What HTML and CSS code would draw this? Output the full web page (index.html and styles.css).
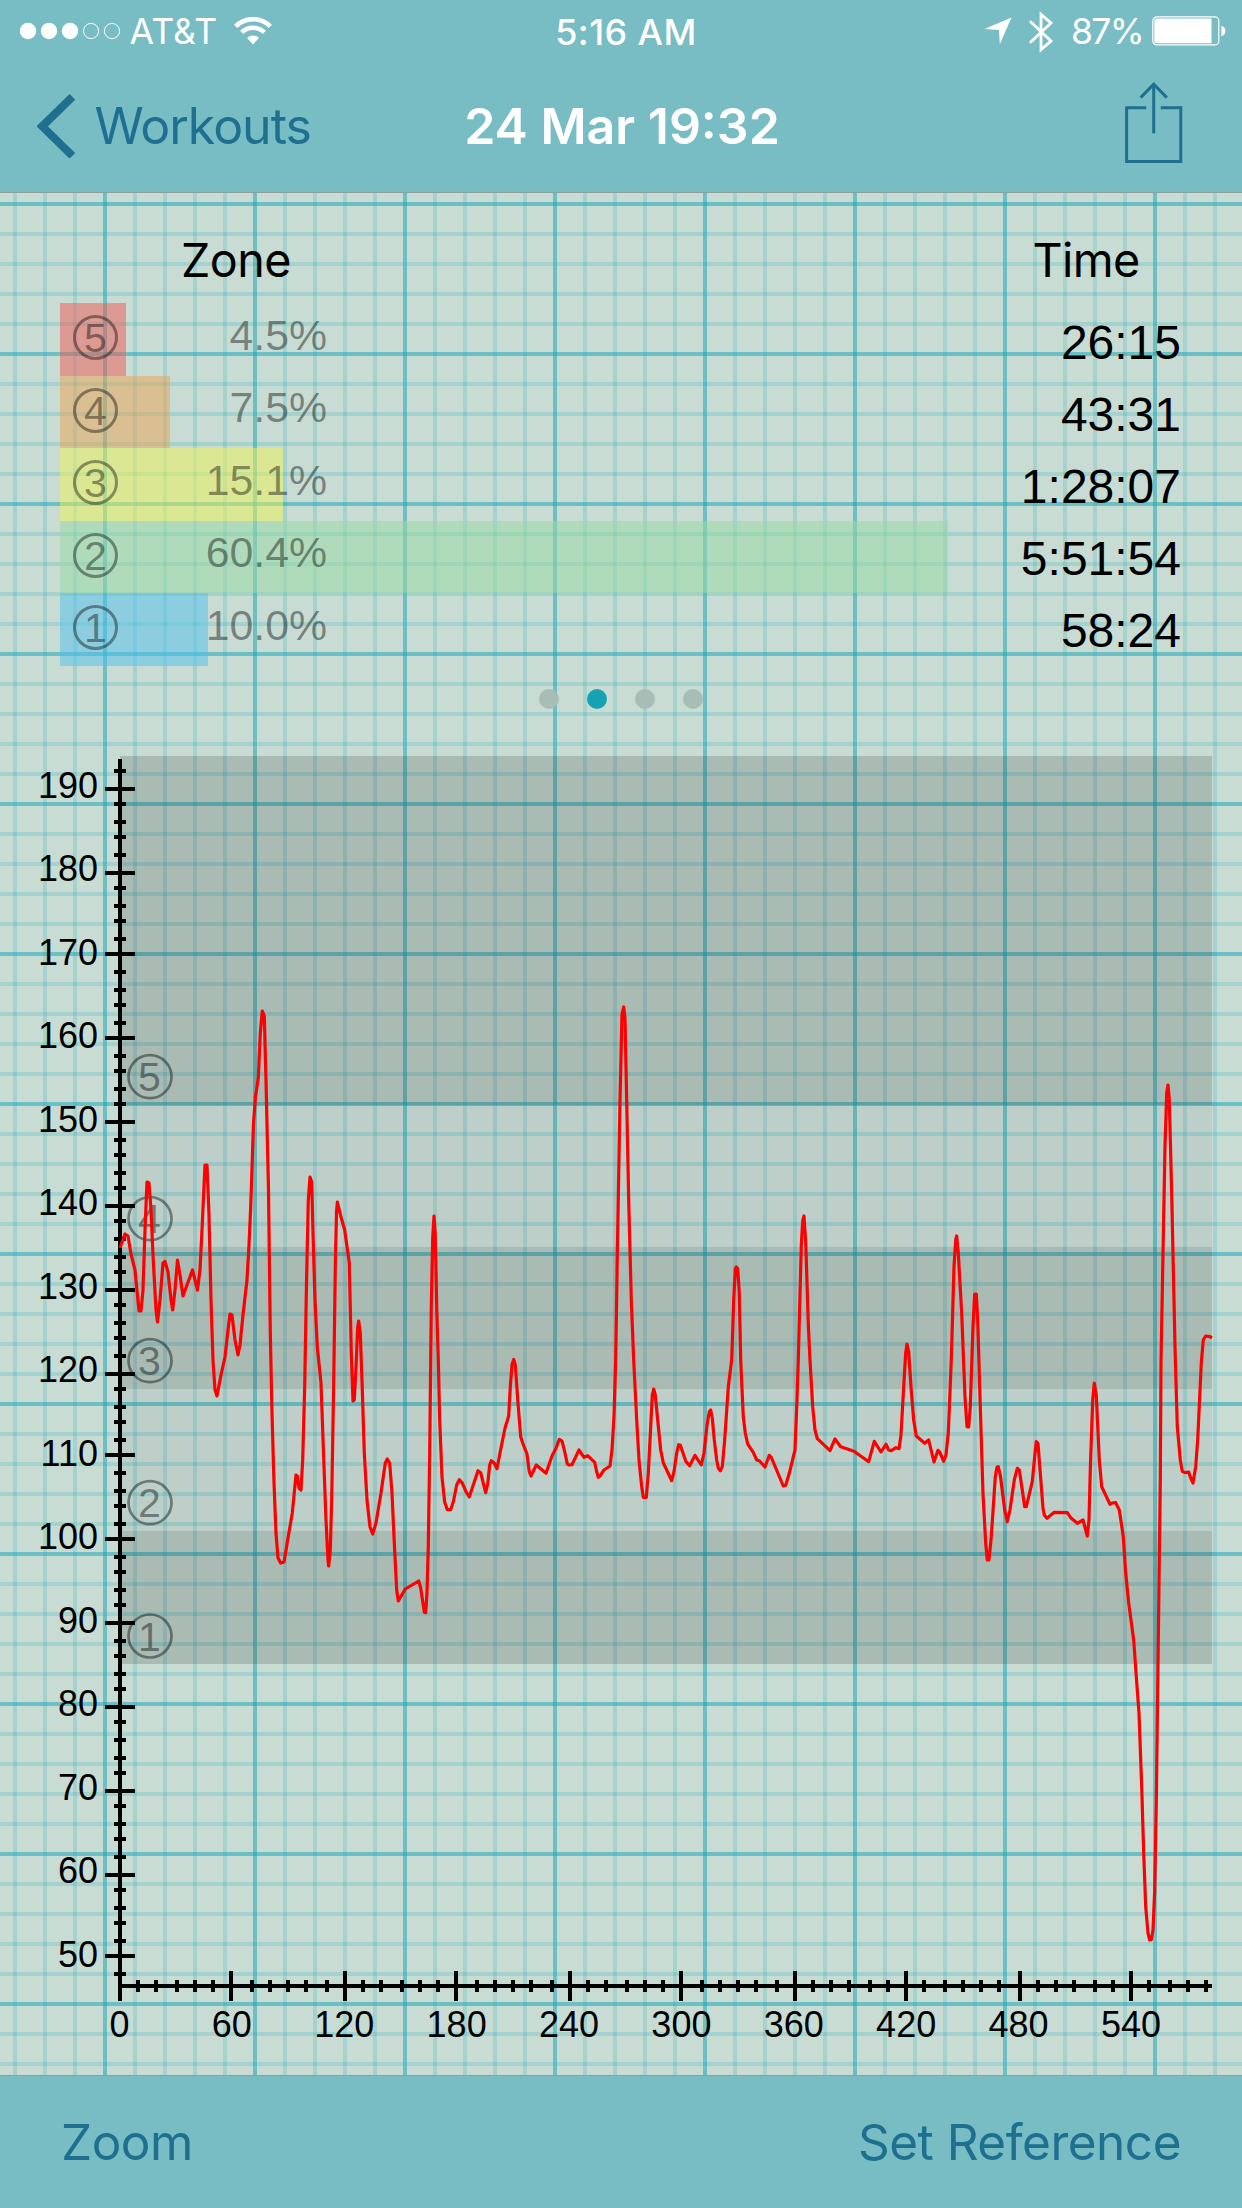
FILE: index.html
```
<!doctype html>
<html>
<head>
  <meta charset="utf-8">
  <title>24 Mar 19:32</title>
  <link rel="stylesheet" href="styles.css">
</head>
<body>
  <header class="topbar">
    <div class="status">
      <div class="status-left">
        <svg class="signal" width="94" height="18" viewBox="0 0 94 18">
          <g fill="#fff">
            <circle cx="9" cy="9" r="8.2"/>
            <circle cx="30" cy="9" r="8.2"/>
            <circle cx="51" cy="9" r="8.2"/>
          </g>
          <g fill="none" stroke="#fff">
            <circle cx="72" cy="9" r="7.6"/>
            <circle cx="93" cy="9" r="7.6"/>
          </g>
        </svg>
        <span class="carrier">AT&amp;T</span>
        <svg class="wifi" width="38" height="28" viewBox="0 0 38 28">
          <g fill="none" stroke="#fff" stroke-width="4.6">
            <path d="M1.7 9.4a24.3 24.3 0 0 1 34.6 0"/>
            <path d="M7.7 15.4a16 16 0 0 1 22.6 0"/>
          </g>
          <path fill="#fff" d="M19 27.4l-6-6.4a8.6 8.6 0 0 1 12 0z"/>
        </svg>
      </div>
      <div class="clock">5:16 AM</div>
      <div class="status-right">
        <svg width="28" height="28" viewBox="0 0 28 28"><path fill="#fff" d="M27.5 .5L15.8 27.3 15 12.9 .5 12z"/></svg>
        <svg class="bluetooth" width="24" height="42" viewBox="0 0 24 42">
          <path fill="none" stroke="#fff" stroke-width="2.8" d="M1 10.2L22 30 12 38.6V3.4L22 12 1 31.8"/>
        </svg>
        <span class="percent">87%</span>
        <svg width="74" height="30" viewBox="0 0 74 30">
          <rect x=".8" y=".9" width="66" height="28" rx="4" fill="none" stroke="#fff" stroke-width="1.2"/>
          <path fill="#fff" d="M4 2.6H59.5V27.2H4Q2.3 27.2 2.3 25V5Q2.3 2.6 4 2.6z"/>
          <path fill="#fff" d="M69.4 10q4 .8 4 5t-4 5z"/>
        </svg>
      </div>
    </div>
    <nav class="nav">
      <a class="back">
        <svg width="40" height="64" viewBox="0 0 40 64"><path fill="none" stroke="#1f7090" stroke-width="8" d="M35.4 2.8L5.2 32.3 35.4 61.8"/></svg>
        <span>Workouts</span>
      </a>
      <h1>24 Mar 19:32</h1>
      <svg class="share" width="58" height="82" viewBox="0 0 58 82">
        <g fill="none" stroke="#1f7090" stroke-width="3">
          <path d="M21.2 25.7H1.6V79.5H55.8V25.7H35.8"/>
          <path d="M28.7 51.3V2"/>
          <path d="M15.6 15.6L28.7 2.2 41.8 15.6"/>
        </g>
      </svg>
    </nav>
  </header>

  <main>
    <section class="summary">
      <div class="zones">
        <h2>Zone</h2>
        <div class="zone"><div class="bar z5" style="width: 66px"></div><span class="num">5</span><span class="share-of">4.5%</span></div>
        <div class="zone"><div class="bar z4" style="width: 110px"></div><span class="num">4</span><span class="share-of">7.5%</span></div>
        <div class="zone"><div class="bar z3" style="width: 222.5px"></div><span class="num">3</span><span class="share-of">15.1%</span></div>
        <div class="zone"><div class="bar z2" style="width: 888px"></div><span class="num">2</span><span class="share-of">60.4%</span></div>
        <div class="zone"><div class="bar z1" style="width: 147.5px"></div><span class="num">1</span><span class="share-of">10.0%</span></div>
      </div>
      <div class="times">
        <h2>Time</h2>
        <div class="time">26:15</div>
        <div class="time">43:31</div>
        <div class="time">1:28:07</div>
        <div class="time">5:51:54</div>
        <div class="time">58:24</div>
      </div>
    </section>
    <div class="dots"><i></i><i class="active"></i><i></i><i></i></div>
    <svg id="chart" class="chart" width="1242" height="1325" viewBox="0 750 1242 1325"></svg>
  </main>

  <footer class="toolbar">
    <a class="zoom">Zoom</a>
    <a class="set-ref">Set Reference</a>
  </footer>
  <script src="chart.js"></script>
</body>
</html>
```
FILE: styles.css
```
* { box-sizing: border-box; }
body {
  margin: 0;
  width: 1242px;
  height: 2208px;
  display: flex;
  flex-direction: column;
  overflow: hidden;
  font-family: Inter, "Liberation Sans", sans-serif;
  color: #000;
  background: #c8dcd4;
}
h1, h2 { margin: 0; font-weight: 400; }

.topbar {
  height: 193px;
  background: #77bdc3;
  border-bottom: 1px solid #8b9f9e;
}
.status {
  height: 60px;
  display: grid;
  grid-template-columns: 1fr 160px 1fr;
  align-items: center;
  color: #fff;
  font-size: 35.5px;
  line-height: 60px;
}
.status-left { display: flex; align-items: center; padding-left: 19px; }
.signal { overflow: visible; }
.carrier { margin-left: 16.5px; margin-top: 2px; width: 87.5px; white-space: nowrap; letter-spacing: 0.2px; }
.wifi { margin-left: 17px; }
.clock { text-align: center; font-weight: 500; font-size: 36px; letter-spacing: 0.4px; white-space: nowrap; margin-top: 2px; margin-left: 10px; }
.status-right { display: flex; align-items: center; justify-content: flex-end; padding-right: 16px; }
.bluetooth { margin-left: 17px; margin-top: 1px; }
.percent { margin-left: 18px; margin-top: 2px; width: 72px; white-space: nowrap; letter-spacing: -1.6px; }
.status-right svg:last-child { margin-left: 9px; }

.nav {
  height: 132px;
  padding: 0 59px 0 37px;
  display: grid;
  grid-template-columns: 1fr 330px 1fr;
  align-items: center;
}
.back { display: flex; align-items: center; color: #1f7090; font-size: 50px; letter-spacing: -1px; }
.back span { margin-left: 17.5px; }
.nav h1 { color: #fff; font-size: 50px; font-weight: 600; white-space: nowrap; text-align: center; margin-left: 12px; margin-right: -12px; }
.share { justify-self: end; margin-top: -6px; }

/* graph paper: 30px squares, heavier line every 150px */
main {
  height: 1882px;
  background-color: #c8dcd4;
  background-image:
    linear-gradient(rgba(20, 165, 180, .51) 4px, transparent 4px),
    linear-gradient(90deg, rgba(20, 165, 180, .51) 4px, transparent 4px),
    linear-gradient(rgba(20, 165, 180, .19) 4px, transparent 4px),
    linear-gradient(rgba(20, 165, 180, .19) 4px, transparent 4px),
    linear-gradient(rgba(20, 165, 180, .19) 4px, transparent 4px),
    linear-gradient(rgba(20, 165, 180, .19) 4px, transparent 4px),
    linear-gradient(90deg, rgba(20, 165, 180, .19) 4px, transparent 4px),
    linear-gradient(90deg, rgba(20, 165, 180, .19) 4px, transparent 4px),
    linear-gradient(90deg, rgba(20, 165, 180, .19) 4px, transparent 4px),
    linear-gradient(90deg, rgba(20, 165, 180, .19) 4px, transparent 4px);
  background-size: 150px 150px;
  background-position: 0 9px, 103px 0, 0 39px, 0 69px, 0 99px, 0 129px, 133px 0, 13px 0, 43px 0, 73px 0;
}
.summary {
  height: 473px;
  display: flex;
  justify-content: space-between;
  padding: 37px 60px 0;
}
.summary h2 { font-size: 46.7px; line-height: 60px; letter-spacing: -0.6px; }
.zones { width: 890px; }
.zones h2 { width: 352px; text-align: center; height: 73px; }
.zone {
  height: 72.6px;
  display: grid;
  grid-template-columns: 70px 197px 1fr;
}
.zone > * { grid-row: 1; }
.bar { grid-column: 1 / 4; height: 100%; opacity: .5; }
.z5 { background: #f05852; }
.z4 { background: #eca250; }
.z3 { background: #f0f252; }
.z2 { background: #98daa2; }
.z1 { background: #50c0ec; }
.num, .share-of { z-index: 1; color: rgba(0, 0, 0, .42); }
.num {
  grid-column: 1;
  width: 45px;
  height: 45px;
  margin: 12px 0 0 13px;
  border: 3px solid rgba(0, 0, 0, .4);
  border-radius: 50%;
  text-align: center;
  font: 41px/41px "Liberation Sans", Arial, sans-serif;
}
.share-of {
  grid-column: 2;
  text-align: right;
  font: 42.8px/60px "Liberation Sans", Arial, sans-serif;
  margin-top: 1.5px;
}
.times { width: 200px; text-align: right; }
.times h2 { text-align: center; padding-left: 8px; height: 75px; }
.time { height: 72px; padding-right: 1px; font: 48px/76px "Liberation Sans", Arial, sans-serif; }

.dots { height: 84px; padding-top: 23px; display: flex; justify-content: center; gap: 28px; }
.dots i { width: 20px; height: 20px; border-radius: 50%; background: #a7bdb5; }
.dots .active { background: #17a2b4; }

.chart { display: block; font: 36px "Liberation Sans", Arial, sans-serif; }
.band-dark { fill: rgba(0, 0, 0, .15); }
.band-light { fill: rgba(0, 0, 0, .055); }
.axis { stroke: #000; stroke-width: 4; fill: none; }
.zone-mark circle { fill: none; stroke: rgba(0, 0, 0, .42); stroke-width: 2.7; }
.zone-mark text { fill: rgba(0, 0, 0, .42); font-size: 41px; text-anchor: middle; }
.y-label { text-anchor: end; }
.x-label { text-anchor: middle; }
.pulse { fill: none; stroke: #f00; stroke-width: 3.2; stroke-linejoin: round; }

.toolbar {
  height: 133px;
  padding: 0 61px;
  border-top: 1px solid #8b9f9e;
  background: #77bdc3;
  color: #1f7090;
  display: flex;
  justify-content: space-between;
  align-items: center;
  font-size: 49.5px;
  letter-spacing: -0.5px;
}
```
FILE: chart.js
```
var chart = document.getElementById('chart');

var bands = [
  [756, 1105, 'band-dark'],
  [1105, 1247, 'band-light'],
  [1247, 1389, 'band-dark'],
  [1389, 1531, 'band-light'],
  [1531, 1664, 'band-dark']
];

var marks = [[5, 1076.7], [4, 1218.7], [3, 1360.7], [2, 1502.7], [1, 1636]];

var pulse = '120,1248 125,1234 128,1236 131,1254 135,1270 139,1311 141,1311 143,1290 145,1230 147,1182 149,1183 151,1210 153,1255 156,1310 157.5,1322 ' +
  '160,1300 163,1263 165,1261.5 168,1272 171,1300 172.7,1310 175,1290 177.5,1260 180,1275 183,1296 187,1285 192.5,1270 197.5,1290 200,1270 202,1230 ' +
  '205,1165 207,1165 209,1215 211,1300 213,1360 215,1390 217,1396 221,1375 225,1357 228,1330 230,1314 232,1315 235,1340 238,1355 240,1345 243,1315 ' +
  '247,1280 249,1245 250.7,1207 253.5,1123 255.5,1096.7 258.3,1078 260.3,1033 262.3,1011 264.3,1016 266,1080 268.5,1190 270.3,1333 272,1413 274,1483 276,1533 278,1558 ' +
  '280.7,1563 284,1562 287.7,1540 292.3,1513 296,1475 297.3,1476 299,1488 301,1490 302.7,1460 304.7,1387 306.5,1283 308.3,1200 310,1177 311.7,1182 ' +
  '313,1233 315,1300 317.3,1347 321,1383 323.3,1447 326,1520 328,1560 328.7,1566 330.3,1550 331.7,1500 333.7,1383 335.3,1267 336.5,1212 337.4,1202 ' +
  '341,1217 344.7,1230 349.3,1263 351.3,1353 353,1401 354.3,1400 356,1367 357.7,1327 358.7,1321 360.3,1333 362,1380 364.3,1453 367,1500 370,1527 ' +
  '372.7,1534 376,1523 381,1493 385.3,1463 387.3,1459 389.7,1463 392,1493 394.3,1543 396.7,1590 398.3,1601 ' +
  '405.3,1589 418.7,1581 420.7,1588 424.3,1612 425.7,1612.7 427,1593 428.3,1547 429.7,1453 430.7,1360 431.3,1307 432.7,1238 434,1216 435.3,1235 ' +
  '436.7,1307 438.3,1360 439.7,1420 442,1477 444.7,1502 447.3,1509.7 450.7,1509.7 453.3,1502 456.7,1485 459.3,1479.7 462.3,1483 466,1491.7 469.3,1497 ' +
  '473.3,1485 478,1470.7 480.7,1472.7 483.3,1483.3 485.7,1492.7 487.7,1484 489.7,1465 491.3,1460.7 494,1462.7 497,1468.7 500,1453 505,1428.3 508.7,1416 ' +
  '510.3,1386.7 512,1365 513.7,1359.5 515.3,1365 518,1403 520.7,1436.7 522.7,1443 527,1454 529.3,1471.7 531,1476 536.3,1465 546,1473.3 552,1456 ' +
  '556,1448.3 559.3,1439.3 562,1441 564.7,1451.7 567.3,1464 568.7,1465 572,1464.7 579,1450 584,1457.3 587.7,1455.7 594.7,1462.3 596.7,1471.7 598.3,1477.3 ' +
  '600,1476 604,1470 610,1466 612,1450 614,1416.7 615.7,1360 617.3,1255.5 620,1100.5 622,1014.4 623.7,1007 625,1018 626.7,1100.5 628.7,1200 631.3,1300 ' +
  '633.7,1360 636.7,1420 639,1460 641.7,1486.7 643.3,1497.3 646.3,1497.3 648.3,1473.3 650.7,1426.7 652.3,1395 653.7,1389 655.3,1395 657.7,1420 ' +
  '660.7,1450 663.3,1462.7 671.7,1480.7 674,1471.7 676.7,1453 678.7,1444.7 680.3,1445 686,1461.7 689.7,1465.7 695,1455.3 701.3,1465 704,1453 707.3,1423 ' +
  '709.3,1412 710.7,1410 712.3,1418 714.3,1440 716.7,1460 718.3,1468 720.3,1470.7 722.3,1466.7 724.7,1440 728.3,1386.7 731.7,1360 733.7,1300 735.3,1269 ' +
  '736.3,1267 737.7,1268.6 739.3,1293 740.7,1360 743.3,1416.7 745.3,1433 747.7,1444 753.3,1452.3 756.7,1460 759.3,1460.7 765,1467 769.3,1455.3 771.3,1457.3 ' +
  '783.3,1486 785.7,1485.3 789.3,1473.3 795,1450 797,1400 798.3,1360 801.3,1245 802.7,1221 804,1216 805.7,1241.7 808.3,1324 810,1360 812.7,1406.7 815,1430 ' +
  '817.3,1438.7 830,1450.7 835,1439 840.7,1446.7 854,1451.3 868.7,1461.7 874.3,1441.3 881,1452 886,1444.3 888.7,1450 891.3,1450.7 896,1447.7 899,1448.7 ' +
  '901,1435 903.7,1386.7 905.7,1353 907,1344 908.7,1351.7 911,1386.7 913.7,1420 916.3,1436 924.7,1443.3 928.7,1440 934,1462 938,1450.3 939.7,1452 943.7,1461.3 ' +
  '946,1455 948.3,1433 951.3,1360 954,1266.7 955.7,1240 956.7,1236 958.3,1253 961.7,1313 965,1396.7 967,1426.7 968.7,1427 970.3,1406.7 973,1326.7 ' +
  '974.7,1294 976.3,1294 977.7,1320 980.3,1406.7 983,1493.3 985.7,1543 987.3,1560 989,1560 991.3,1536.7 995.3,1476.7 997,1467.3 998.3,1466.7 1000.3,1475 ' +
  '1004.7,1510 1007.3,1521.7 1010,1510 1014.3,1480 1017.3,1468.3 1019.3,1470 1021.3,1483.3 1024.7,1506.7 1026.3,1506.7 1032.3,1481.7 1034.7,1456.7 ' +
  '1036.3,1441.7 1038,1443.3 1040.3,1473 1043,1508 1044.3,1515 1047,1518.3 1054.3,1512.3 1067.3,1512.7 1070.7,1517.7 1077.3,1523.3 1083,1520 1087.3,1536 ' +
  '1089,1520 1090.3,1470 1092.7,1400 1094.3,1383 1096.3,1395 1099.3,1460 1101.7,1486.7 1110,1504.3 1112,1503 1115.7,1502.7 1119.3,1510 1121.3,1523 ' +
  '1123.3,1536.7 1125.7,1573 1128.7,1603 1133.7,1640 1136.3,1676.7 1139,1713 1141.7,1786.7 1143.7,1853 1145.7,1906.7 1148,1933 1149.7,1940 1151.3,1939.7 ' +
  '1153,1930 1154.7,1890 1156.3,1803 1158.3,1640 1160.3,1480 1161,1363 1162.7,1270 1165,1146.7 1166.7,1093 1168,1085 1169.3,1100 1171.7,1193 1175,1346.7 ' +
  '1177.3,1426.7 1180.3,1460 1182.3,1471.3 1185,1472.7 1188.7,1472 1190.7,1478 1193,1483 1195.7,1466.7 1197.7,1440 1201.3,1363 1203.3,1340 1205.7,1336 ' +
  '1210,1336.7 1212,1337.7';

function add(parent, name, attrs, text) {
  var elm = document.createElementNS('http://www.w3.org/2000/svg', name);
  for (var key in attrs) {
    elm.setAttribute(key, attrs[key]);
  }
  if (text !== undefined) {
    elm.textContent = text;
  }
  parent.appendChild(elm);
  return elm;
}

// ticks sit on whole points, 3px each
function snap(v) {
  return Math.round(v / 3) * 3;
}

function yPos(bpm) {
  return 1372.6 - (bpm - 120) * 8.35;
}

function xPos(min) {
  return 120 + min * 1.873;
}

bands.forEach(function (b) {
  add(chart, 'rect', { x: 120, y: b[0], width: 1092, height: b[1] - b[0], 'class': b[2] });
});

marks.forEach(function (m) {
  var g = add(chart, 'g', { 'class': 'zone-mark' });
  add(g, 'circle', { cx: 150, cy: m[1], r: 21.5 });
  add(g, 'text', { x: 149.5, y: m[1] + 14.6 }, m[0]);
});

var d = 'M120 759V2001M120 1986H1212';
for (var bpm = 48; bpm <= 192; bpm += 2) {
  var y = snap(yPos(bpm));
  d += bpm % 10 ? 'M114 ' + y + 'h12' : 'M105 ' + y + 'h30';
  if (bpm % 10 == 0) {
    add(chart, 'text', { x: 98, y: yPos(bpm) + 9.5, 'class': 'y-label' }, bpm);
  }
}
for (var min = 0; min <= 580; min += 10) {
  var x = snap(xPos(min));
  if (min > 0) {
    d += min % 60 ? 'M' + x + ' 1980v12' : 'M' + x + ' 1971v30';
  }
  if (min % 60 == 0) {
    add(chart, 'text', { x: xPos(min) - 0.5, y: 2037, 'class': 'x-label' }, min);
  }
}
add(chart, 'path', { d: d, 'class': 'axis' });
add(chart, 'polyline', { points: pulse, 'class': 'pulse' });
```
